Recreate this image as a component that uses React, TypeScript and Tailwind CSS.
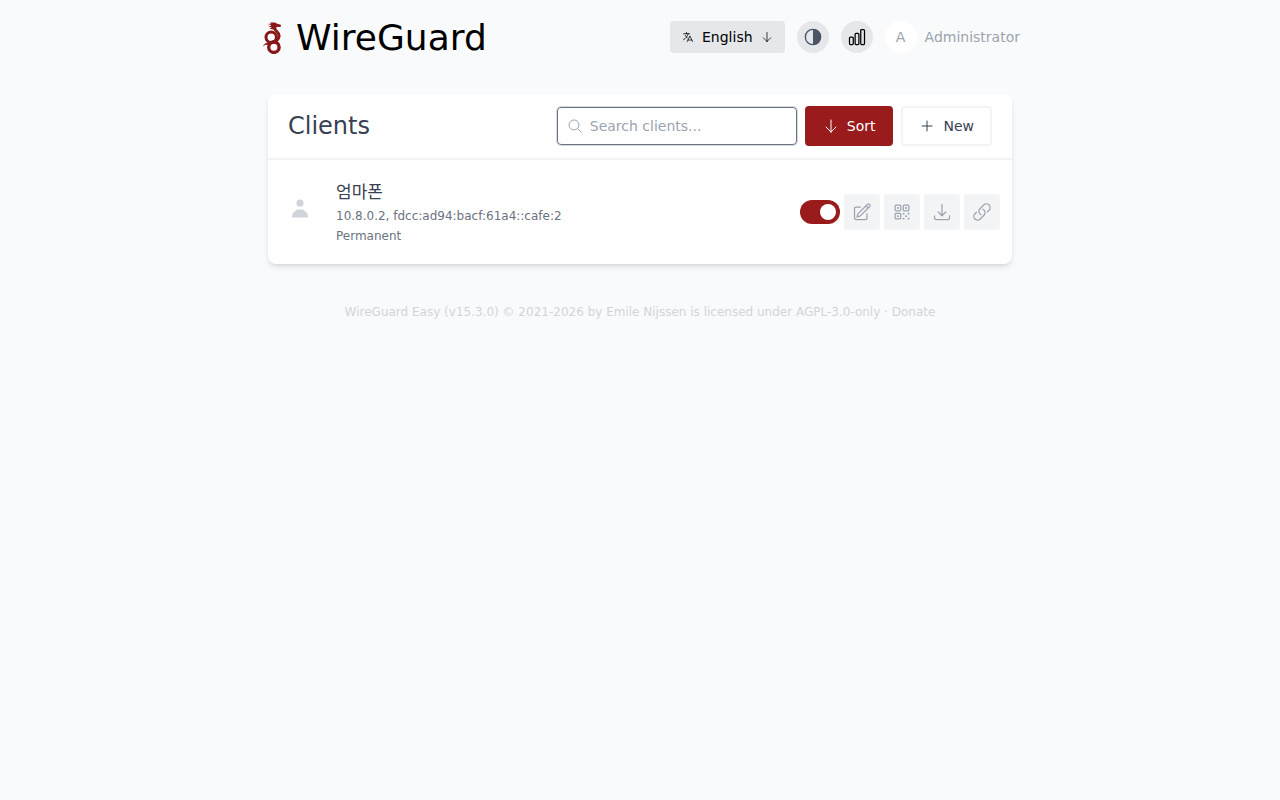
import { useState } from "react";
import {
  HiOutlineArrowDown,
  HiOutlineArrowDownTray,
  HiOutlineChartBar,
  HiOutlineLanguage,
  HiOutlineLink,
  HiOutlineMagnifyingGlass,
  HiOutlinePencilSquare,
  HiOutlinePlus,
  HiOutlineQrCode,
} from "react-icons/hi2";

type Client = {
  id: number;
  name: string;
  addresses: string;
  expires: string;
  enabled: boolean;
};

const initialClients: Client[] = [
  {
    id: 1,
    name: "엄마폰",
    addresses: "10.8.0.2, fdcc:ad94:bacf:61a4::cafe:2",
    expires: "Permanent",
    enabled: true,
  },
];

const clientActions = [
  { label: "Edit", Icon: HiOutlinePencilSquare },
  { label: "Show QR code", Icon: HiOutlineQrCode },
  { label: "Download configuration", Icon: HiOutlineArrowDownTray },
  { label: "One-time link", Icon: HiOutlineLink },
];

function DragonLogo() {
  return (
    <svg viewBox="0 0 32 32" className="size-8" fill="none" stroke="#88171a" aria-hidden="true">
      {/* head */}
      <path
        fill="#88171a"
        stroke="none"
        d="M11.8 2 15.4 1.5 14 0.5 19 0.5 21.2 1.8 24.8 2.8 25 4.4 23.4 4.9 20.8 4.8 20.2 6.2 20.6 7.6 17.2 7.6 13.4 6.4 16 5.4 12.2 4.6 15.2 3.8 14.4 2.8Z"
      />
      {/* neck and coils */}
      <path d="M18.4 6C18.6 8.8 23 9.6 23.2 13.8 23.2 17.4 20.4 19.2 17.4 20.2" strokeWidth="2.8" />
      <circle cx="15.2" cy="15.3" r="5.2" strokeWidth="3" />
      <circle cx="17.9" cy="25.2" r="5.2" strokeWidth="3.4" />
      <path d="M20 18C17 20.2 13.8 20 11.6 22.6" strokeWidth="2.2" />
      {/* tail */}
      <path fill="#88171a" stroke="none" d="M6.8 24.4C8 22 10 20.6 13 20.2L11.6 23C10 22.4 8.4 23.2 6.8 24.4Z" />
    </svg>
  );
}

function HalfCircleIcon() {
  return (
    <svg viewBox="0 0 24 24" className="size-5" aria-hidden="true">
      <circle cx="12" cy="12" r="9.2" fill="none" stroke="currentColor" strokeWidth="1.6" />
      <path d="M12 2.5a9.5 9.5 0 0 1 0 19z" fill="currentColor" />
    </svg>
  );
}

function UserIcon() {
  return (
    <svg viewBox="0 0 20 20" className="size-6" fill="currentColor" aria-hidden="true">
      <path d="M10 9a3 3 0 1 0 0-6 3 3 0 0 0 0 6zm-7 9a7 7 0 1 1 14 0H3z" />
    </svg>
  );
}

function Header() {
  return (
    <header className="flex flex-wrap items-center justify-between gap-3 pr-1">
      <a href="#" className="mt-0.5 flex items-center gap-2">
        <DragonLogo />
        <h1 className="text-4xl font-medium">WireGuard</h1>
      </a>
      <div className="flex items-center gap-3">
        <button type="button" className="flex h-8 items-center gap-2 rounded-sm bg-gray-200 px-3 text-sm">
          <HiOutlineLanguage className="size-3" />
          English
          <HiOutlineArrowDown className="size-3" />
        </button>
        <button
          type="button"
          aria-label="Toggle theme"
          className="flex size-8 items-center justify-center rounded-full bg-gray-200 text-[#4b5563]"
        >
          <HalfCircleIcon />
        </button>
        <button
          type="button"
          aria-label="Toggle charts"
          className="flex size-8 items-center justify-center rounded-full bg-gray-200"
        >
          <HiOutlineChartBar className="size-5" />
        </button>
        <button type="button" className="flex items-center gap-2 text-sm text-[#9ca3af]">
          <span className="flex size-8 items-center justify-center rounded-full bg-white">A</span>
          Administrator
        </button>
      </div>
    </header>
  );
}

function ClientRow({ client, onToggle }: { client: Client; onToggle: () => void }) {
  return (
    <li className="flex items-center justify-between gap-3 px-3 py-[18px]">
      <div className="flex gap-4">
        <div className="mt-2.5 flex size-10 items-center justify-center text-[#d1d5db]">
          <UserIcon />
        </div>
        <div className="text-xs text-[#6b7280]">
          <div className="text-[17px] leading-7 text-[#374151]">{client.name}</div>
          <div className="leading-5">{client.addresses}</div>
          <div className="leading-5">{client.expires}</div>
        </div>
      </div>
      <div className="flex items-center gap-1 text-[#9ca3af]">
        <button
          type="button"
          role="switch"
          aria-checked={client.enabled}
          aria-label={`Enable ${client.name}`}
          onClick={onToggle}
          className={`flex h-6 w-10 items-center rounded-full px-1 ${
            client.enabled ? "justify-end bg-[#991b1b]" : "justify-start bg-gray-200"
          }`}
        >
          <span className="size-4 rounded-full bg-white" />
        </button>
        {clientActions.map(({ label, Icon }) => (
          <button
            key={label}
            type="button"
            aria-label={label}
            className="flex size-9 items-center justify-center rounded-sm bg-[#f3f4f6]"
          >
            <Icon className="size-5" />
          </button>
        ))}
      </div>
    </li>
  );
}

export default function App() {
  const [clients, setClients] = useState(initialClients);
  const [search, setSearch] = useState("");
  const [ascending, setAscending] = useState(true);

  const visible = clients
    .filter((c) => c.name.includes(search))
    .sort((a, b) => (ascending ? 1 : -1) * a.name.localeCompare(b.name));

  function toggle(id: number) {
    setClients((prev) => prev.map((c) => (c.id === id ? { ...c, enabled: !c.enabled } : c)));
  }

  return (
    <div className="min-h-screen bg-[#f9fafb] font-['DejaVu_Sans','Noto_Sans_CJK_KR',sans-serif] text-black">
      <div className="mx-auto max-w-3xl pt-4">
        <Header />

        <main className="mx-3 mt-9 overflow-hidden rounded-lg bg-white shadow-md">
          <div className="flex flex-wrap items-center justify-between gap-3 border-b-2 border-[#f3f4f6] px-5 py-3">
            <h2 className="text-2xl text-[#374151]">Clients</h2>
            <div className="flex items-center gap-2 text-sm">
              <label className="flex h-[38px] w-60 items-center gap-[7px] rounded-sm border border-[#6b7280] px-[9px] text-[#9ca3af] ring-1 ring-[#d5d8e0]">
                <HiOutlineMagnifyingGlass className="size-4" />
                <input
                  type="text"
                  aria-label="Search clients"
                  placeholder="Search clients..."
                  value={search}
                  onChange={(e) => setSearch(e.target.value)}
                  className="min-w-0 flex-1 text-[#374151] outline-none placeholder:text-[#9ca3af]"
                />
              </label>
              <button
                type="button"
                onClick={() => setAscending(!ascending)}
                className="flex h-10 items-center gap-2 rounded-sm border-2 border-[#991b1b] bg-[#991b1b] px-4 text-white"
              >
                <HiOutlineArrowDown className="size-4" />
                Sort
              </button>
              <button
                type="button"
                className="flex h-10 items-center gap-2 rounded-sm border-2 border-[#f3f4f6] px-4 text-[#374151]"
              >
                <HiOutlinePlus className="size-4" />
                New
              </button>
            </div>
          </div>
          <ul>
            {visible.map((client) => (
              <ClientRow key={client.id} client={client} onToggle={() => toggle(client.id)} />
            ))}
          </ul>
        </main>

        <footer className="mt-10 text-center text-xs text-[#d1d5db]">
          <a href="#">WireGuard Easy</a> (v15.3.0) © 2021-2026 by <a href="#">Emile Nijssen</a> is licensed under{" "}
          <a href="#">AGPL-3.0-only</a> · <a href="#">Donate</a>
        </footer>
      </div>
    </div>
  );
}
